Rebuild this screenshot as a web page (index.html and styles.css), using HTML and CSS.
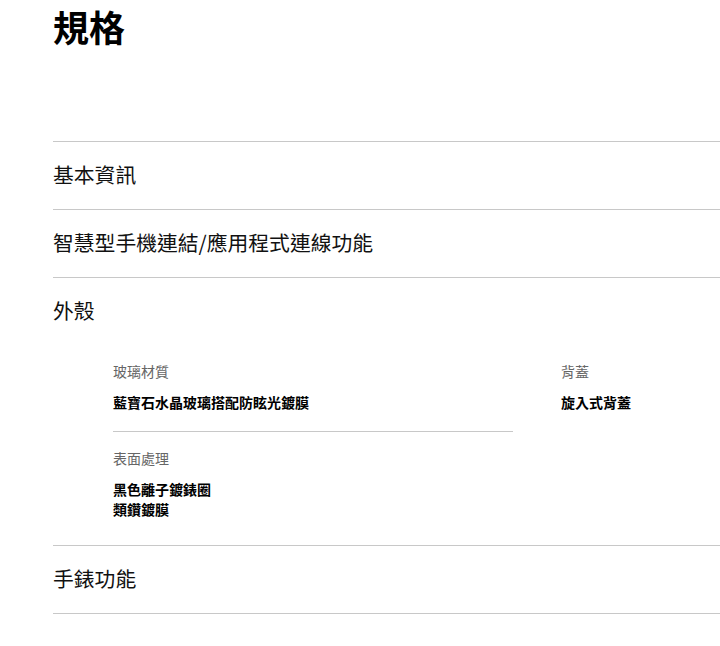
FILE: index.html
```html
<!DOCTYPE html>
<html lang="zh-Hant">
<head>
<meta charset="utf-8">
<title>規格</title>
<link rel="stylesheet" href="styles.css">
</head>
<body>
<div class="page">
  <h1 class="title">規格</h1>
  <div class="accordion">
    <div class="section"><div class="section-head">基本資訊</div></div>
    <div class="section"><div class="section-head">智慧型手機連結/應用程式連線功能</div></div>
    <div class="section open">
      <div class="section-head">外殼</div>
      <div class="section-body">
        <div class="col col-left">
          <div class="item">
            <div class="label">玻璃材質</div>
            <div class="value">藍寶石水晶玻璃搭配防眩光鍍膜</div>
          </div>
          <div class="item">
            <div class="label">表面處理</div>
            <div class="value">黑色離子鍍錶圈<br>類鑽鍍膜</div>
          </div>
        </div>
        <div class="col col-right">
          <div class="item">
            <div class="label">背蓋</div>
            <div class="value">旋入式背蓋</div>
          </div>
        </div>
      </div>
    </div>
    <div class="section"><div class="section-head">手錶功能</div></div>
  </div>
</div>
</body>
</html>
```
FILE: styles.css
```css
* { box-sizing: border-box; }
html, body { margin: 0; padding: 0; background: #fff; }
body {
  font-family: "Noto Sans CJK TC", "Noto Sans", sans-serif;
  color: #000;
}
.page {
  padding-left: 53px;
}
.title {
  margin: 0;
  padding-top: 2px;
  font-size: 36px;
  line-height: 48px;
  font-weight: 700;
  height: 141px;
}
.accordion {
  border-top: 1px solid #c8c8c8;
}
.section {
  border-bottom: 1px solid #c8c8c8;
}
.section-head {
  height: 67px;
  line-height: 64px;
  font-size: 20.8px;
  font-weight: 400;
  color: #111;
}
.section-body {
  display: grid;
  grid-template-columns: 400px 1fr;
  column-gap: 48px;
  padding: 0 0 26px 60px;
}
.item {
  padding-top: 16px;
  padding-bottom: 19px;
}
.col-left .item:not(:last-child) {
  border-bottom: 1px solid #c8c8c8;
}
.col-left .item:last-child,
.col-right .item:last-child {
  padding-bottom: 0;
}
.label {
  font-size: 14px;
  line-height: 20px;
  color: #666;
}
.value {
  margin-top: 11px;
  font-size: 14px;
  line-height: 20px;
  font-weight: 700;
  color: #000;
}
```
